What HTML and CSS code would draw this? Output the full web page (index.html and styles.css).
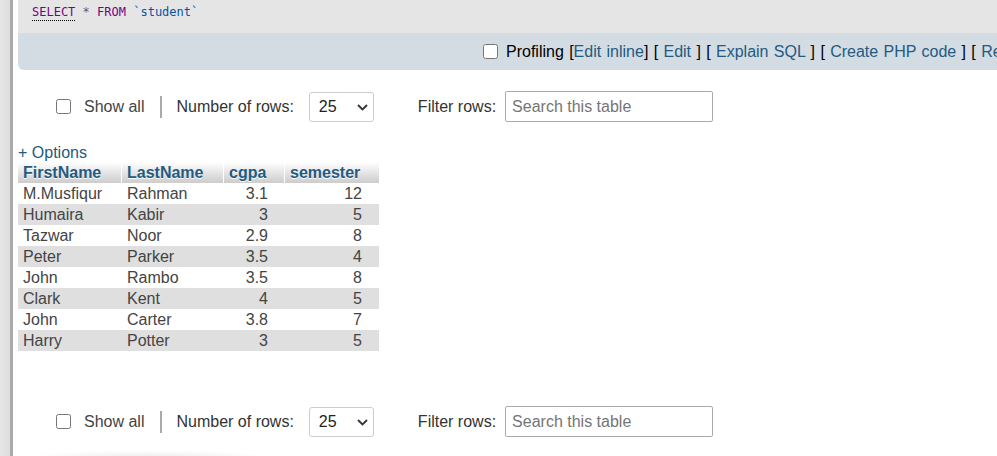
FILE: index.html
```html
<!DOCTYPE html>
<html lang="en">
<head>
<meta charset="utf-8">
<title>student</title>
<link rel="stylesheet" href="styles.css">
</head>
<body>
<div class="page">
  <div class="rail"></div>
  <main class="main">
    <div class="sqlbox">
      <div class="sqlcode"><span class="kw under">SELECT</span> <span class="op">*</span> <span class="kw">FROM</span> <span class="ident">`student`</span></div>
      <div class="toolbar">
        <input type="checkbox" class="cb prof-cb">
        <span class="tools">Profiling [<a class="lnk">Edit inline</a>] [ <a class="lnk">Edit</a> ] [ <a class="lnk">Explain SQL</a> ] [ <a class="lnk">Create PHP code</a> ] [ <a class="lnk">Refresh</a> ]</span>
      </div>
    </div>

    <div class="controls top">
      <input type="checkbox" class="cb show-cb">
      <span class="show-lbl">Show all</span>
      <span class="sep"></span>
      <span class="rows-lbl">Number of rows:</span>
      <span class="selwrap">
        <select class="sel"><option>25</option></select>
        <svg class="chev" width="11" height="7" viewBox="0 0 11 7"><path d="M1 1 L5.5 5.5 L10 1" fill="none" stroke="#333" stroke-width="1.8"/></svg>
      </span>
      <span class="filter-lbl">Filter rows:</span>
      <input type="text" class="search" placeholder="Search this table">
    </div>

    <div class="options"><a class="lnk">+ Options</a></div>

    <table class="data">
      <thead>
        <tr><th class="c1">FirstName</th><th class="c2">LastName</th><th class="c3">cgpa</th><th class="c4">semester</th></tr>
      </thead>
      <tbody>
        <tr><td>M.Musfiqur</td><td>Rahman</td><td class="num">3.1</td><td class="num">12</td></tr>
        <tr><td>Humaira</td><td>Kabir</td><td class="num">3</td><td class="num">5</td></tr>
        <tr><td>Tazwar</td><td>Noor</td><td class="num">2.9</td><td class="num">8</td></tr>
        <tr><td>Peter</td><td>Parker</td><td class="num">3.5</td><td class="num">4</td></tr>
        <tr><td>John</td><td>Rambo</td><td class="num">3.5</td><td class="num">8</td></tr>
        <tr><td>Clark</td><td>Kent</td><td class="num">4</td><td class="num">5</td></tr>
        <tr><td>John</td><td>Carter</td><td class="num">3.8</td><td class="num">7</td></tr>
        <tr><td>Harry</td><td>Potter</td><td class="num">3</td><td class="num">5</td></tr>
      </tbody>
    </table>

    <div class="controls bottom">
      <input type="checkbox" class="cb show-cb">
      <span class="show-lbl">Show all</span>
      <span class="sep"></span>
      <span class="rows-lbl">Number of rows:</span>
      <span class="selwrap">
        <select class="sel"><option>25</option></select>
        <svg class="chev" width="11" height="7" viewBox="0 0 11 7"><path d="M1 1 L5.5 5.5 L10 1" fill="none" stroke="#333" stroke-width="1.8"/></svg>
      </span>
      <span class="filter-lbl">Filter rows:</span>
      <input type="text" class="search" placeholder="Search this table">
    </div>

    <div class="shade"></div>
  </main>
</div>
</body>
</html>
```

FILE: styles.css
```css
html, body {
  margin: 0;
  padding: 0;
  overflow: hidden;
  background: #fff;
}
body {
  font-family: "Liberation Sans", Arial, sans-serif;
  font-size: 16px;
  color: #444;
}
.page {
  display: flex;
  width: 997px;
  height: 456px;
  overflow: hidden;
}
.rail {
  flex: 0 0 10px;
  background: linear-gradient(to right, #e6e6e6, #dedede);
  border-right: 3px solid #aaa;
}
.main {
  flex: 1 1 auto;
  min-width: 0;
  overflow: hidden;
}
.sqlbox {
  margin-left: 5px;
  border-bottom-left-radius: 6px;
  overflow: hidden;
}
.sqlcode {
  height: 33px;
  box-sizing: border-box;
  background: #e5e5e5;
  padding: 5px 0 0 14px;
  font-family: "DejaVu Sans Mono", "Liberation Mono", monospace;
  font-size: 12px;
  line-height: 14px;
  white-space: pre;
  color: #555;
}
.kw { color: #708; }
.under { border-bottom: 1px dotted #000; padding-bottom: 1px; }
.op { color: #756; }
.ident { color: #05a; }
.toolbar {
  height: 37px;
  background: #d3dce3;
  display: flex;
  align-items: center;
  padding-left: 465px;
  white-space: nowrap;
  color: #000;
}
.cb {
  width: 15px;
  height: 15px;
  margin: 0;
  flex: 0 0 auto;
}
.prof-cb { margin-right: 8px; }
.tools {
  line-height: 19px;
  word-spacing: 0.9px;
}
.lnk {
  color: #235a81;
  text-decoration: none;
}
.controls {
  display: flex;
  align-items: center;
  height: 31px;
  white-space: nowrap;
  color: #333;
}
.controls.top { margin-top: 21px; }
.controls.bottom { margin-top: 55px; }
.show-cb { margin-left: 43px; }
.show-lbl { margin-left: 13px; color: #444; }
.sep {
  margin-left: 16px;
  width: 2px;
  height: 22px;
  background: #aaa;
}
.rows-lbl { margin-left: 14px; }
.selwrap {
  position: relative;
  margin-left: 15px;
  display: block;
  width: 65px;
  height: 30px;
}
.sel {
  appearance: none;
  -webkit-appearance: none;
  width: 65px;
  height: 30px;
  box-sizing: border-box;
  border: 1px solid #ccc;
  border-radius: 3px;
  background: #fff;
  padding: 0 0 0 9px;
  margin: 0;
  font-family: "Liberation Sans", Arial, sans-serif;
  font-size: 16px;
  color: #222;
}
.chev {
  position: absolute;
  left: 48px;
  top: 12px;
  pointer-events: none;
}
.filter-lbl { margin-left: 44px; }
.search {
  margin-left: 9px;
  width: 208px;
  height: 31px;
  box-sizing: border-box;
  border: 1px solid #aaa;
  border-radius: 2px;
  padding: 0 6px;
  font-family: "Liberation Sans", Arial, sans-serif;
  font-size: 16px;
  color: #333;
}
.search::placeholder { color: #757575; }
.options {
  margin: 21px 0 0 5px;
  line-height: 19px;
  height: 19px;
}
.data {
  margin-left: 5px;
  border-collapse: separate;
  border-spacing: 0;
  table-layout: fixed;
  width: 361px;
}
.data th, .data td {
  box-sizing: border-box;
  padding: 1px 17px 1px 5px;
  line-height: 19px;
  white-space: nowrap;
}
.data th {
  text-align: left;
  font-weight: bold;
  color: #235a81;
  text-shadow: 0 1px 0 #fff;
  background: linear-gradient(#fff, #ccc);
  border-right: 1px solid #fff;
}
.data th.c4 { border-right: 0; }
.c1 { width: 104px; }
.c2 { width: 102px; }
.c3 { width: 61px; }
.c4 { width: 94px; }
.data td { color: #444; }
.data td.num { text-align: right; }
.data tbody tr:nth-child(odd) td { background: #fff; }
.data tbody tr:nth-child(even) td { background: #dfdfdf; }
.shade {
  margin: 13px 0 0 12px;
  width: 250px;
  height: 8px;
  background: radial-gradient(ellipse at 50% 100%, #ebebeb 0%, rgba(235,235,235,0) 70%);
}
```
